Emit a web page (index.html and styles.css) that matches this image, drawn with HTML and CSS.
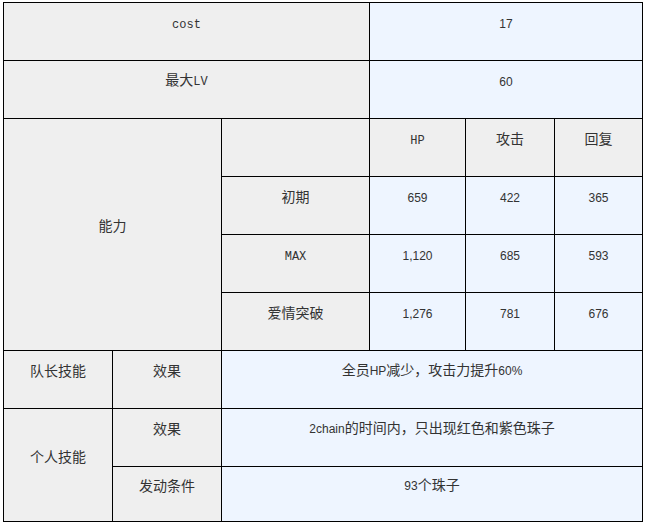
FILE: index.html
```html
<!DOCTYPE html>
<html>
<head>
<meta charset="utf-8">
<link rel="stylesheet" href="styles.css">
</head>
<body>
<table class="stats">
  <colgroup>
    <col class="c1"><col class="c2"><col class="c3"><col class="c4"><col class="c5"><col class="c6">
  </colgroup>
  <tr>
    <td class="g m" colspan="3"><span class="mono">cost</span></td>
    <td class="b num" colspan="3">17</td>
  </tr>
  <tr>
    <td class="g" colspan="3">最大<span class="mono">LV</span></td>
    <td class="b num" colspan="3">60</td>
  </tr>
  <tr>
    <td class="g" colspan="2" rowspan="4">能力</td>
    <td class="g"></td>
    <td class="g m"><span class="mono">HP</span></td>
    <td class="g">攻击</td>
    <td class="g">回复</td>
  </tr>
  <tr>
    <td class="g">初期</td>
    <td class="b num">659</td>
    <td class="b num">422</td>
    <td class="b num">365</td>
  </tr>
  <tr>
    <td class="g m"><span class="mono">MAX</span></td>
    <td class="b num">1,120</td>
    <td class="b num">685</td>
    <td class="b num">593</td>
  </tr>
  <tr>
    <td class="g">爱情突破</td>
    <td class="b num">1,276</td>
    <td class="b num">781</td>
    <td class="b num">676</td>
  </tr>
  <tr>
    <td class="g">队长技能</td>
    <td class="g">效果</td>
    <td class="b" colspan="4">全员<span class="lat">HP</span>减少，攻击力提升<span class="lat">60%</span></td>
  </tr>
  <tr>
    <td class="g" rowspan="2">个人技能</td>
    <td class="g">效果</td>
    <td class="b" colspan="4"><span class="lat">2chain</span>的时间内，只出现红色和紫色珠子</td>
  </tr>
  <tr class="last">
    <td class="g">发动条件</td>
    <td class="b" colspan="4"><span class="lat">93</span>个珠子</td>
  </tr>
</table>
</body>
</html>
```

FILE: styles.css
```css
html, body {
  margin: 0;
  padding: 0;
  background: #ffffff;
}

.stats {
  margin: 2px 0 0 3px;
  border-collapse: separate;
  border-spacing: 0;
  border-top: 1px solid #000000;
  border-left: 1px solid #000000;
  table-layout: fixed;
  width: 640px;
  font-family: "Noto Sans CJK SC", "Liberation Sans", sans-serif;
  font-size: 14px;
  color: #333333;
}

.c1 { width: 109px; }
.c2 { width: 109px; }
.c3 { width: 148px; }
.c4 { width: 96px; }
.c5 { width: 89px; }
.c6 { width: 88px; }

.stats tr {
  height: 58px;
}

.stats tr.last {
  height: 55px;
}

.stats td {
  border-right: 1px solid #000000;
  border-bottom: 1px solid #000000;
  text-align: center;
  vertical-align: middle;
  padding: 0 0 19px 0;
  line-height: 16px;
}

.stats td.m {
  padding-bottom: 16px;
}

.g { background: #efefef; }
.b { background: #eef5ff; }

.stats td.num {
  font-family: "Liberation Sans", sans-serif;
  font-size: 12px;
  padding-bottom: 15px;
}

.lat {
  font-family: "Liberation Sans", sans-serif;
  font-size: 12px;
}

.mono {
  font-family: "Liberation Mono", monospace;
  font-size: 12px;
}
```
